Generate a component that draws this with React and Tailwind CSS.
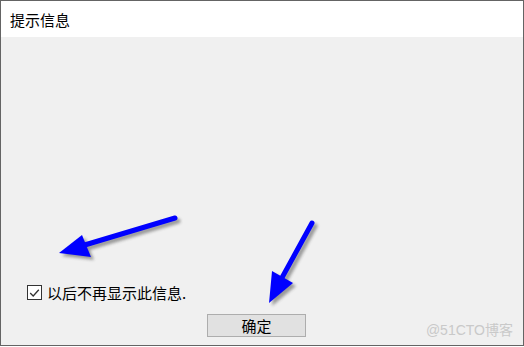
import React from "react";

const font = { fontFamily: '"Noto Sans CJK SC", "Microsoft YaHei", sans-serif' };

export default function App() {
  return (
    <div className="relative w-[524px] h-[347px] bg-white overflow-hidden" style={font}>
      <div className="h-[346px] border border-[#646464] flex flex-col">
        <div className="h-[36px] shrink-0 bg-white pl-[9px] flex items-center text-[15px] text-black leading-none">
          提示信息
        </div>
        <div className="flex-1 bg-[#f0f0f0] flex flex-col justify-end relative">
          <div className="flex items-center pl-[26px] gap-[5px] mb-[14px]">
            <div className="w-[15px] h-[15px] border border-[#333333] bg-white flex items-center justify-center">
              <svg width="11" height="10" viewBox="0 0 11 10">
                <path d="M1.2 5 L4.2 8 L9.8 1.8" fill="none" stroke="#333" strokeWidth="1.3" />
              </svg>
            </div>
            <span className="text-[15px] leading-none text-black">以后不再显示此信息.</span>
          </div>
          <div className="pl-[206px] mb-[8px]">
            <div className="w-[99px] h-[23px] border border-[#adadad] bg-[#e1e1e1] flex items-center justify-center text-[15px] leading-none text-black">
              确定
            </div>
          </div>
          <div className="absolute right-[10px] bottom-[8px] text-[14px] text-[#c9c9c9] leading-none" style={{ fontFamily: '"Liberation Sans", "Noto Sans CJK SC", sans-serif' }}>
            @51CTO博客
          </div>
        </div>
      </div>
      <svg className="absolute inset-0 pointer-events-none" width="524" height="347" viewBox="0 0 524 347">
        <defs>
          <filter id="sh" x="-20%" y="-20%" width="140%" height="140%">
            <feGaussianBlur stdDeviation="1.8" />
          </filter>
        </defs>
        <g transform="translate(3,3)" opacity="0.45" filter="url(#sh)" fill="#333" stroke="#333">
          <line x1="175" y1="218" x2="78" y2="247" strokeWidth="5" strokeLinecap="round" />
          <polygon points="59,253 82,235 91,257" stroke="none" />
          <line x1="312" y1="223" x2="278" y2="285" strokeWidth="5" strokeLinecap="round" />
          <polygon points="269,303 272,271 293,283" stroke="none" />
        </g>
        <g fill="#0000ff" stroke="#0000ff">
          <line x1="175" y1="218" x2="78" y2="247" strokeWidth="5" strokeLinecap="round" />
          <polygon points="59,253 82,235 91,257" stroke="none" />
          <line x1="312" y1="223" x2="278" y2="285" strokeWidth="5" strokeLinecap="round" />
          <polygon points="269,303 272,271 293,283" stroke="none" />
        </g>
      </svg>
    </div>
  );
}
